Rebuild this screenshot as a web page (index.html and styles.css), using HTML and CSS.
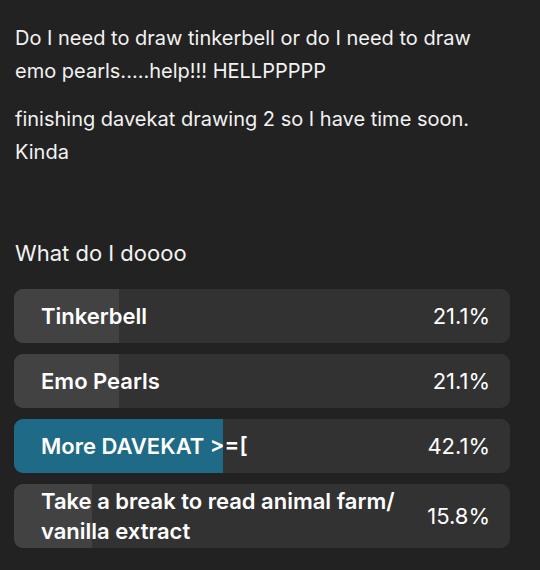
FILE: index.html
```html
<!DOCTYPE html>
<html>
<head>
<meta charset="utf-8">
<link rel="stylesheet" href="styles.css">
</head>
<body>
<div class="post">
  <p class="para">Do I need to draw tinkerbell or do I need to draw emo pearls.....help!!! HELLPPPPP</p>
  <p class="para">finishing davekat drawing 2 so I have time soon. Kinda</p>
  <div class="poll">
    <h2 class="question">What do I doooo</h2>
    <div class="options">
      <div class="option">
        <div class="fill" style="width:21.1%"></div>
        <span class="label">Tinkerbell</span>
        <span class="pct">21.1%</span>
      </div>
      <div class="option">
        <div class="fill" style="width:21.1%"></div>
        <span class="label">Emo Pearls</span>
        <span class="pct">21.1%</span>
      </div>
      <div class="option winner">
        <div class="fill" style="width:42.1%"></div>
        <span class="label">More DAVEKAT &gt;=[</span>
        <span class="pct">42.1%</span>
      </div>
      <div class="option tall">
        <div class="fill" style="width:15.8%"></div>
        <span class="label">Take a break to read animal farm/ vanilla extract</span>
        <span class="pct">15.8%</span>
      </div>
    </div>
  </div>
</div>
</body>
</html>
```

FILE: styles.css
```css
html, body {
  margin: 0;
  padding: 0;
  background: #222222;
}
body {
  font-family: Inter, "Noto Sans", sans-serif;
  color: #ffffff;
  width: 540px;
  height: 570px;
  overflow: hidden;
}
.post {
  padding: 22px 30px 0 15px;
}
.para {
  margin: 0 0 15px 0;
  font-size: 20px;
  line-height: 33px;
  color: #f2f2f2;
}
.poll {
  margin-top: 70px;
}
.question {
  margin: 0 0 22px 0;
  font-size: 22px;
  font-weight: 400;
  line-height: 28px;
  color: #f2f2f2;
}
.options {
  display: flex;
  flex-direction: column;
  gap: 11px;
  width: 496px;
  margin-left: -1px;
}
.option {
  position: relative;
  display: flex;
  align-items: center;
  justify-content: space-between;
  min-height: 54px;
  background: #323232;
  border-radius: 9px;
  overflow: hidden;
  padding: 0 20px 0 27px;
  box-sizing: border-box;
}
.option.tall {
  min-height: 64px;
}
.fill {
  position: absolute;
  left: 0;
  top: 0;
  bottom: 0;
  background: #424242;
}
.winner .fill {
  background: #1e6a87;
}
.label {
  position: relative;
  font-size: 22px;
  font-weight: 600;
  line-height: 30px;
  color: #ffffff;
  max-width: 390px;
}
.pct {
  position: relative;
  font-size: 22px;
  font-weight: 400;
  color: #ffffff;
}
```
